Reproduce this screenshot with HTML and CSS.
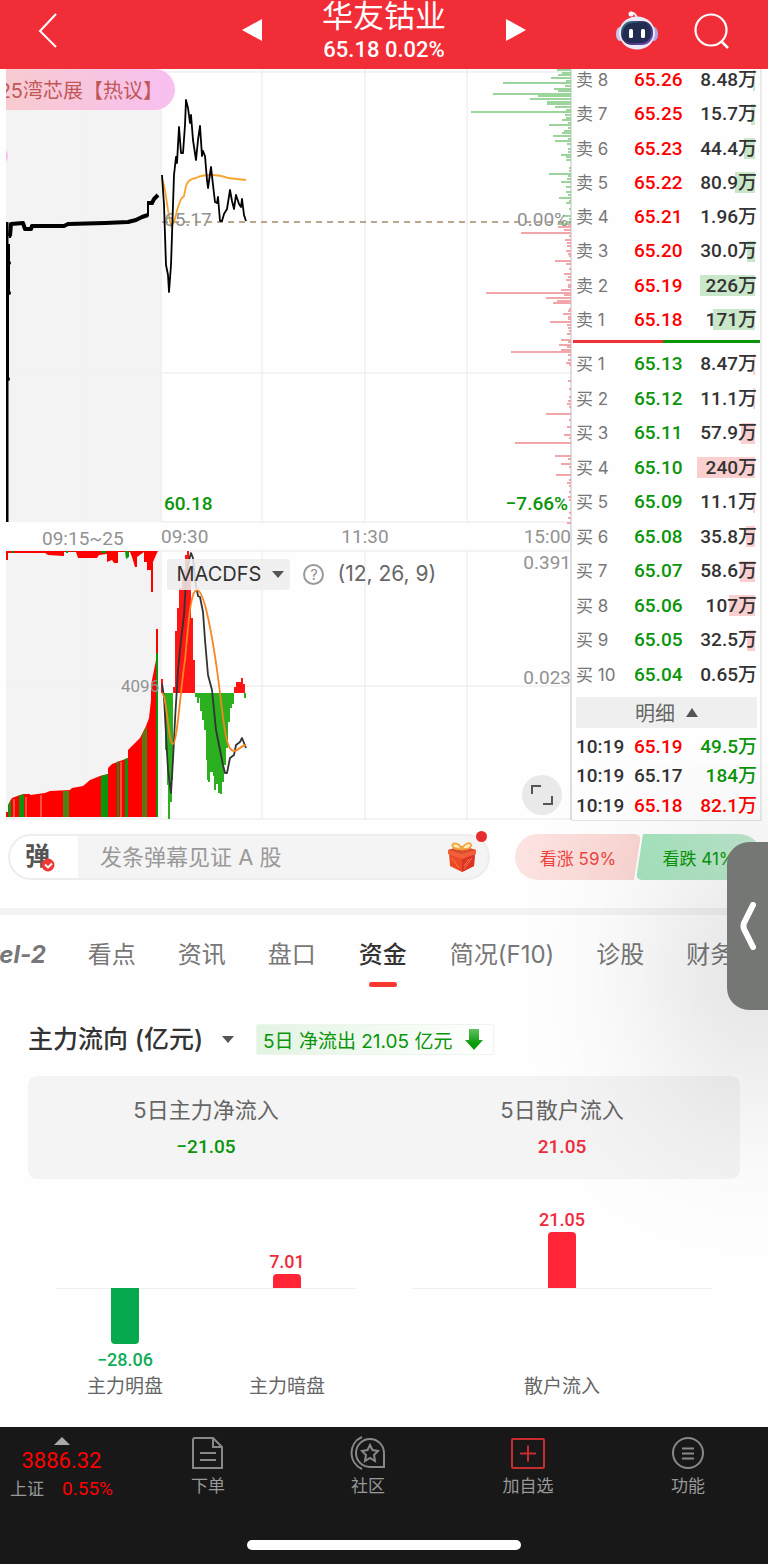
FILE: index.html
```html
<!DOCTYPE html>
<html lang="zh-CN">
<head>
<meta charset="utf-8">
<meta name="viewport" content="width=device-width, initial-scale=1">
<title>华友钴业 65.18</title>
<link rel="stylesheet" href="styles.css">
</head>
<body>
<header class="topbar">
  <button class="icon-btn back" aria-label="返回"><svg width="20" height="36" viewBox="0 0 20 36"><path d="M18 1 2 18l16 16" fill="none" stroke="#fff" stroke-width="2"/></svg></button>
  <div class="stock">
    <button class="icon-btn" aria-label="上一只"><svg width="20" height="22" viewBox="0 0 20 22"><path d="M0 11 20 0v22z" fill="#fff"/></svg></button>
    <div class="stock-title"><h1>华友钴业</h1><p>65.18 0.02%</p></div>
    <button class="icon-btn" aria-label="下一只"><svg width="20" height="22" viewBox="0 0 20 22"><path d="M20 11 0 0v22z" fill="#fff"/></svg></button>
  </div>
  <div class="tools">
    <button class="icon-btn" aria-label="智能助手"><svg width="42" height="40" viewBox="0 0 42 40">
      <defs><linearGradient id="face" x1="0" y1="0" x2="1" y2="1"><stop offset="0" stop-color="#3b8b98"/><stop offset=".4" stop-color="#28284f"/><stop offset="1" stop-color="#7d50d0"/></linearGradient></defs>
      <path d="M14 2q6-1 7 6" fill="none" stroke="#f4e4f0" stroke-width="2"/><circle cx="15" cy="3" r="2.5" fill="#fff"/>
      <ellipse cx="4" cy="23" rx="4" ry="7" fill="#c9c7f0"/><ellipse cx="38" cy="23" rx="4" ry="7" fill="#aaa9e4"/>
      <ellipse cx="21" cy="22" rx="18" ry="16.500" fill="#eceafb"/>
      <rect x="5" y="10" width="32" height="24" rx="11" fill="url(#face)"/><rect x="7" y="12" width="28" height="20" rx="9" fill="#222c50"/>
      <rect x="13" y="18" width="4" height="9" rx="1.500" fill="#fff"/><rect x="25" y="18" width="4" height="9" rx="1.500" fill="#fff"/>
    </svg></button>
    <button class="icon-btn" aria-label="搜索"><svg width="36" height="36" viewBox="0 0 36 36"><circle cx="17" cy="17" r="15.500" fill="none" stroke="#fff" stroke-width="2.200"/><path d="m27 28 7 7" stroke="#fff" stroke-width="2.500"/></svg></button>
  </div>
</header>

<main class="content">
<section class="board">
  <div class="chart">
    <svg class="chart-svg" viewBox="6 69 566 751" role="img" aria-label="分时走势">
      <rect x="6" y="69" width="155" height="453" fill="#f3f3f3"/><rect x="6" y="551" width="154" height="267" fill="#f3f3f3"/>
      <g fill="none" stroke="#efefef" stroke-width="1.500">
        <path d="M161 72H571M161 373H571M161 522H571M6 551H571M161 686H571M6 819H572M161 69V522M262 69V522M365 69V522M467 69V522M161 551V819M262 551V819M365 551V819M467 551V819"/>
        <path d="M84 110V522M84 551V800M6 373H161M6 686H161" stroke-dasharray="2 2" stroke-width="1"/>
      </g>
      <path d="M571 69V820" stroke="#dedede" stroke-width="2"/>
      <path fill="none" stroke="#9bd59b" stroke-width="1.800" d="M571 70h-14m14 3h-9m9 2h-13m13 3h-20m20 3h-5m5 2h-68m68 3h-6m6 3h-17m17 2h-13m13 3h-78m78 2h-33m33 3h-41m41 3h-24m24 2h-24m24 3h-16m16 3h-5m5 2h-100m100 3h-6m6 3h-5m5 2h-9m9 3h-3m3 2h-22m22 3h-3m3 3h-7m7 2h-9m9 3h-18m18 3h-3m3 2h-16m16 3h-4m4 5h-3m3 3h-3m3 3h-10m10 2h-5m5 3h-5m5 8h-2m2 3h-2m2 3h-22m22 2h-3m3 3h-4m4 3h-10m10 5h-5m5 5h-5m5 3h-3m3 3h-12m12 3h-2m2 2h-5m5 6h-2m2 7h-8m8 3h-2m2 3h-4m4 2h-13"/>
      <path fill="none" stroke="#f2a6aa" stroke-width="1.800" d="M571 225h-3m3 2h-13m13 3h-7m7 3h-50m50 3h-2m2 4h-6m6 3h-4m4 3h-4m4 5h-5m5 3h-3m3 2h-2m2 5h-16m16 3h-5m5 5h-2m2 5h-7m7 3h-3m3 3h-5m5 5h-3m3 2h-3m3 3h-10m10 3h-85m85 2h-7m7 3h-25m25 3h-14m14 2h-18m18 6h-2m2 2h-3m3 3h-8m8 3h-3m3 2h-3m3 3h-21m21 3h-4m4 3h-3m3 3h-2m2 3h-4m4 6h-10m10 2h-3m3 3h-12m12 2h-4m4 3h-10m10 2h-60m60 3h-3m3 5h-3m3 3h-5m5 2h-2m2 16h-3m3 8h-2m2 8h-2m2 4h-3m3 3h-4m4 3h-2m2 7h-25m25 6h-2m2 7h-4m4 8h-7m7 3h-2m2 5h-56m56 13h-16m16 3h-3m3 5h-10m10 3h-2m2 8h-15m15 5h-2m2 3h-4m4 3h-2m2 6h-2m2 5h-3m3 3h-2m2 13h-2m2 5h-3m3 5h-4"/>
      <path d="M162 222H571" stroke="#a58b6b" stroke-width="1.500" stroke-dasharray="6 5"/>
      <path d="M7 522V222" fill="none" stroke="#000" stroke-width="3"/><path d="M8 379V292M9 292V264M9 262V244M10 238V235" fill="none" stroke="#000" stroke-width="2"/>
      <g><circle cx="10" cy="235" r="2"/><circle cx="9" cy="263" r="2"/><circle cx="9" cy="293" r="2"/><circle cx="8" cy="379" r="2"/></g>
      <path d="M10 236L11 224 23 223 25 229 31 229 32 226 64 226 68 224 105 223 128 222 136 220 142 217 148 215" fill="none" stroke="#000" stroke-width="4" stroke-linejoin="round"/>
      <path d="M148 216V203" stroke="#000" stroke-width="2"/><path d="M147 203H152L154 199 158 195" fill="none" stroke="#000" stroke-width="4"/>
      <path d="M162 178 165 190 168 210 171 226 174 222 178 207 181 199 184 196 186 186Q188 179 196 178C203 174 218 174 228 178L246 180" fill="none" stroke="#f6a52e" stroke-width="1.800"/>
      <g class="lbl"><text x="164" y="226">65.17</text><text x="568" y="226" text-anchor="end">0.00%</text>
      <text x="161" y="543">09:30</text><text x="42" y="545">09:15~25</text><text x="365" y="543" text-anchor="middle">11:30</text><text x="571" y="543" text-anchor="end">15:00</text><text x="571" y="569" text-anchor="end">0.391</text><text x="571" y="684" text-anchor="end">0.023</text></g>
      <g class="lbl lbl-green"><text x="164" y="510">60.18</text><text x="568" y="510" text-anchor="end">−7.66%</text></g>
      <path d="M162 175 164 205 166 265 168 275 169 292 171 265 173 205 174 175 176 157 177 163 179 127 181 153 183 153 185 125 186 100 188 108 190 123 191 115 193 140 196 160 198 140 200 126 202 156 203 151 205 156 207 180 208 188 211 167 213 185 215 202 217 203 218 197 220 221 222 221 224 214 227 209 230 190 232 201 234 209 236 195 239 204 241 207 242 199 244 215 246 221" fill="none" stroke="#000" stroke-width="1.800" stroke-linejoin="round"/>

      <path fill="#f00" d="M6 817V812H8V805L12 798 20 795 24 794H30V795L45 793 50 791 70 790 72 788 83 786 90 780 100 776 108 774V768L112 764 128 758V750L132 746 140 738 146 726 149 718 151 700V685L154 670 156 660V629H158V817z"/>
      <path fill="#0a950a" d="M8 817V806L11 799V817zM19 817V796L24 794V817zM101 817V776L108 774V817zM125 817V759L128 758V817zM117 817V762L119 761V817zM156 817V653H158V817z"/>
      <path fill="#4b8410" d="M63 817V791H69V817zM142 817V735L147 726V817z"/><path d="M144 817V733" stroke="#a24b08"/>
      <path d="M14 817V799M26 817V797M41 817V795M121 817V762" stroke="#ff9a85"/>
      <path fill="#f00" d="M6 551V560H8V553H28L45 553 48 555 64 556V552H76L78 558H97L99 555 107 554V562L112 560 114 563H118V552H130L132 557 135 567H137V557L144 552V562H147V570H151V592H153V562L156 555 158 551z"/>
      <path fill="#0a950a" d="M66 551H68V553H66zM125 551H129V557L126 559zM12 551H14V553H12zM101 551H106V553H101z"/>
      <text class="lbl small" x="121" y="692">4096</text>

      <path fill="#ff1515" d="M161 693V679H163V693zM173 693V687H175V631H177V608H179V588H182V570H185V555H187V551H189V568H191V618H193V660H195V693zM234 693V687H236V682H241V678H243V684H245V693z"/>
      <path fill="#2bb01f" d="M163 693V700H165V750H167V785H168V819H170V802H172V780H173V693zM195 693V697H197V703H199V698H200V711H202V720H204V730H206V760H207V780H208V782H210V772H213V776H214V790H216V784H218V793H220V794H222V782H224V765H226V748H228V722H230V708H232V704H234V693zM244 693V698H246V693z"/>
      <path d="M162 684 164 697 166 735 168 770 171 793 173 760 175 720 178 670 181 640 184 615 186 580 189 560 191 553 193 558 195 580 198 596 200 597 203 612 205 640 208 675 212 690 216 730 219 745 223 765 225 773 227 773 230 758 234 755 236 745 240 742 242 738 246 748" fill="none" stroke="#333" stroke-width="1.800" stroke-linejoin="round"/>
      <path d="M162 693C167 694 168 744 173 744 177 744 181 685 185 660 188 630 190 590 197 590 206 590 216 660 220 693 224 725 226 751 234 751 239 751 241 745 246 745" fill="none" stroke="#f98420" stroke-width="1.800"/>
    </svg>
    <div class="bullet">25湾芯展【热议】</div>
    <div class="bullet-dot"></div>
    <div class="indicator">
      <span class="select-wrap"><select class="ind-select" aria-label="指标"><option>MACDFS</option></select><i class="caret"></i></span>
      <button class="help" aria-label="指标说明">?</button>
      <span>(12, 26, 9)</span>
    </div>
    <button class="expand" aria-label="全屏"><svg width="22" height="22" viewBox="0 0 22 22"><path d="M1 10V2H10M21 12V20H12" fill="none" stroke="#555" stroke-width="2"/></svg></button>
  </div>

  <aside class="book">
    <table class="quotes sell">
      <tr><th>卖 8</th><td>65.26</td><td style="--w:2px">8.48万</td></tr>
      <tr><th>卖 7</th><td>65.25</td><td style="--w:4px">15.7万</td></tr>
      <tr><th>卖 6</th><td>65.23</td><td style="--w:11px">44.4万</td></tr>
      <tr><th>卖 5</th><td>65.22</td><td style="--w:20px">80.9万</td></tr>
      <tr><th>卖 4</th><td>65.21</td><td style="--w:0px">1.96万</td></tr>
      <tr><th>卖 3</th><td>65.20</td><td style="--w:8px">30.0万</td></tr>
      <tr><th>卖 2</th><td>65.19</td><td style="--w:55px">226万</td></tr>
      <tr><th>卖 1</th><td>65.18</td><td style="--w:42px">171万</td></tr>
    </table>
    <div class="ratio"></div>
    <table class="quotes buy">
      <tr><th>买 1</th><td>65.13</td><td style="--w:2px">8.47万</td></tr>
      <tr><th>买 2</th><td>65.12</td><td style="--w:2px">11.1万</td></tr>
      <tr><th>买 3</th><td>65.11</td><td style="--w:14px">57.9万</td></tr>
      <tr><th>买 4</th><td>65.10</td><td style="--w:58px">240万</td></tr>
      <tr><th>买 5</th><td>65.09</td><td style="--w:2px">11.1万</td></tr>
      <tr><th>买 6</th><td>65.08</td><td style="--w:9px">35.8万</td></tr>
      <tr><th>买 7</th><td>65.07</td><td style="--w:15px">58.6万</td></tr>
      <tr><th>买 8</th><td>65.06</td><td style="--w:26px">107万</td></tr>
      <tr><th>买 9</th><td>65.05</td><td style="--w:8px">32.5万</td></tr>
      <tr><th>买 10</th><td>65.04</td><td style="--w:0px">0.65万</td></tr>
    </table>
    <button class="detail-btn">明细 <i class="tri-up"></i></button>
    <table class="quotes trades">
      <tr><th>10:19</th><td class="red">65.19</td><td class="green">49.5万</td></tr>
      <tr><th>10:19</th><td>65.17</td><td class="green">184万</td></tr>
      <tr><th>10:19</th><td class="red">65.18</td><td class="red">82.1万</td></tr>
    </table>
  </aside>
</section>

<section class="social">
  <div class="danmu">
    <button class="danmu-toggle" aria-label="弹幕开关"><b>弹</b><svg width="14" height="14" viewBox="0 0 14 14"><circle cx="7" cy="7" r="6.500" fill="#ee3b36"/><path d="m4 6.500 3 3 4-4" fill="none" stroke="#fff" stroke-width="1.800"/></svg></button>
    <input class="danmu-input" type="text" placeholder="发条弹幕见证 A 股" aria-label="发条弹幕">
    <button class="icon-btn gift" aria-label="礼物"><svg width="30" height="32" viewBox="0 0 30 32">
      <path d="M2 12 15 16V31L3 25zM28 12 15 16V31L27 25z" fill="#ec4a24"/><path d="M28 12 15 16V31L27 25z" fill="#dc3424"/>
      <path d="M1 9 15 5 29 9V13L15 18 1 13z" fill="#f2603a"/><path d="M1 9 15 13 29 9 15 5z" fill="#de4c30"/><path d="M5 17 12 27M25 17l-8 11M22 18l-5 7" stroke="#f8794c"/>
      <path d="M15 8C11 0 3 2 6 6 8 8 12 8 15 8 20 8 23 8 24 5 25 1 18 1 15 8z" fill="#fff0c0" stroke="#f0a840" stroke-width="2"/>
    </svg></button>
    <i class="badge"></i>
  </div>
  <div class="vote">
    <button class="vote-up">看涨 59%</button>
    <button class="vote-down">看跌 41%</button>
  </div>
</section>

<nav class="tabs">
  <a href="#" class="level">Level-2</a><a href="#">看点</a><a href="#">资讯</a><a href="#">盘口</a><a href="#" class="active">资金</a><a href="#">简况(F10)</a><a href="#">诊股</a><a href="#">财务</a>
</nav>

<section class="flow">
  <div class="flow-head">
    <span class="select-wrap"><select class="flow-select" aria-label="流向"><option>主力流向 (亿元)</option></select><i class="caret"></i></span>
    <span class="flow-tag">5日 净流出 21.05 亿元 <svg width="18" height="21" viewBox="0 0 18 21"><defs><linearGradient id="dn" x2="0" y2="1"><stop offset="0" stop-color="#5fc25f"/><stop offset=".7" stop-color="#0a9a0a"/></linearGradient></defs><path d="M4 0H14V11H18L9 21 0 11H4z" fill="url(#dn)"/></svg></span>
  </div>
  <div class="card">
    <div><h2>5日主力净流入</h2><p class="green">−21.05</p></div>
    <div><h2>5日散户流入</h2><p class="card-red">21.05</p></div>
  </div>
  <div class="bars">
    <div class="group pair">
      <div class="col"><div class="up"></div><div class="down"><i class="bar neg" style="height:56px"></i><b>−28.06</b></div><span>主力明盘</span></div>
      <div class="col"><div class="up"><b>7.01</b><i class="bar" style="height:14px"></i></div><div class="down"></div><span>主力暗盘</span></div>
    </div>
    <div class="group">
      <div class="col"><div class="up"><b>21.05</b><i class="bar" style="height:56px"></i></div><div class="down"></div><span>散户流入</span></div>
    </div>
  </div>
</section>
<button class="drawer" aria-label="展开侧栏"><svg width="16" height="48" viewBox="0 0 16 48"><path d="M13 3 4 21q-1 3 0 6l9 18" fill="none" stroke="#fff" stroke-width="6" stroke-linecap="round" stroke-linejoin="round"/></svg></button>
</main>

<footer class="bottom">
  <div class="bottom-row">
    <a href="#" class="index"><i class="tri-up light"></i><b>3886.32</b><span>上证 <em>0.55%</em></span></a>
    <a href="#"><svg width="32" height="34" viewBox="0 0 32 34" fill="none" stroke="#888" stroke-width="2"><path d="M3 2H21L30 11V32H1V4Q1 2 3 2M21 2V11H30M8 17H24M8 24H24"/></svg>下单</a>
    <a href="#"><svg width="36" height="34" viewBox="0 0 36 34" fill="none" stroke="#888" stroke-width="2"><path d="M20 3A14 14 0 1 0 20 31H34V17A14 14 0 0 0 20 3zM12 1C-2 7-2 27 12 33"/><path d="m20 9 2.500 5 5.500 1-4 4 1 6-5-3-5 3 1-6-4-4 5.500-1z"/></svg>社区</a>
    <a href="#"><svg width="34" height="34" viewBox="0 0 34 34" fill="none" stroke="#c82c2e" stroke-width="2"><rect x="1" y="3" width="32" height="29" rx="1"/><path d="M9 17.500H25M17 9.500V25.500"/></svg>加自选</a>
    <a href="#"><svg width="34" height="34" viewBox="0 0 34 34" fill="none" stroke="#888" stroke-width="2"><circle cx="17" cy="17" r="15"/><path d="M11 12.500H23M11 17.500H23M11 22.500H23"/></svg>功能</a>
  </div>
  <i class="home"></i>
</footer>
</body>
</html>
```
FILE: styles.css
```css
* { box-sizing: border-box; }
body { margin: 0; min-height: 100vh; display: flex; flex-direction: column; background: #fefefe; color: #333; font-family: Inter, "Noto Sans CJK SC", sans-serif; overflow-x: hidden; }
button, input, select { font: inherit; color: inherit; border: 0; background: none; padding: 0; margin: 0; appearance: none; outline: 0; }
a { color: inherit; text-decoration: none; }
h1, h2, p { margin: 0; font-weight: 400; }
svg { display: block; }
i, em { font-style: normal; }
.red { color: #f00; }
.green { color: #0a950a; }

.topbar { height: 69px; background: #f12e37; display: grid; grid-template-columns: 1fr auto 1fr; align-items: center; color: #fff; padding: 0 38px; overflow: hidden; }
.icon-btn { display: block; flex: none; }
.back { justify-self: start; padding-bottom: 8px; }
.stock { display: flex; align-items: center; gap: 60px; }
.stock > .icon-btn { padding-bottom: 10px; }
.stock-title { height: 69px; display: flex; flex-direction: column; justify-content: flex-end; align-items: center; padding-bottom: 5px; white-space: nowrap; }
.stock-title h1 { font-size: 31px; line-height: 40px; }
.stock-title p { font: 500 22px/28px Roboto, sans-serif; }
.tools { display: flex; justify-self: end; gap: 36px; align-items: center; padding-bottom: 8px; }

.content { position: relative; flex: 1; }
.board { display: grid; grid-template-columns: minmax(0, 1fr) 196px; padding-left: 6px; }
.chart { position: relative; overflow: hidden; }
.chart-svg { width: 100%; height: auto; }
.lbl { font: 400 19px Roboto, sans-serif; fill: #929292; }
.lbl-green { font-weight: 500; fill: #0a950a; }
.small { font-size: 17px; }
.bullet { position: absolute; left: 0; top: 0; width: 169px; height: 41px; line-height: 45px; display: flex; justify-content: flex-end; overflow: hidden; border-radius: 0 21px 21px 0; background: linear-gradient(90deg, #f8cbd0, #f8bff0); color: #c05858; font-size: 20px; white-space: nowrap; padding-right: 12px; }
.bullet-dot { position: absolute; left: -18px; top: 77px; width: 20px; height: 20px; border-radius: 10px; background: #f8bff0; }
.indicator { position: absolute; left: 28%; top: 65%; margin: 1px 0 0 3px; display: flex; align-items: center; gap: 13px; font-size: 20px; line-height: 30px; color: #666; white-space: nowrap; }
.indicator > span:last-child { font-size: 21px; }
.select-wrap { position: relative; display: inline-flex; align-items: center; }
.caret { position: absolute; right: 6px; border: 6px solid transparent; border-top: 7px solid #555; border-bottom: 0; pointer-events: none; }
.ind-select { height: 31px; background: rgba(238, 238, 238, .86); border-radius: 3px; padding: 0 29px 0 9px; color: #333; }
.help { width: 21px; height: 21px; border: 2px solid #999; border-radius: 50%; font-size: 14px; line-height: 17px; color: #888; }
.expand { position: absolute; right: 10px; bottom: 6px; width: 40px; height: 40px; border-radius: 50%; background: #e9e9e9; display: grid; place-items: center; }

.book { margin-right: 6px; padding: 0 3px 0 1px; border-right: 2px solid #ebebeb; border-bottom: 1px solid #e2e2e2; overflow: hidden; height: 752px; }
.quotes { width: 100%; border-collapse: collapse; table-layout: fixed; font: 500 19px/24px Roboto, "Noto Sans CJK SC", sans-serif; }
.quotes th { width: 61px; padding: 0 0 0 3px; text-align: left; font: 400 17px/24px Inter, "Noto Sans CJK SC", sans-serif; color: #777; white-space: nowrap; }
.quotes td { padding: 0; width: 56px; white-space: nowrap; }
.quotes td:last-child { width: auto; text-align: right; }
.sell { height: 274px; margin-top: -6px; }
.sell td:nth-child(2) { color: #f00; }
.buy { height: 345px; margin-top: 4px; }
.buy td:nth-child(2) { color: #0a950a; }
.sell td:last-child { background: linear-gradient(#c9e7c9, #c9e7c9) no-repeat right 2px center / var(--w) 21px; }
.buy td:last-child { background: linear-gradient(#f9cfd0, #f9cfd0) no-repeat right 2px center / var(--w) 21px; }
.ratio { height: 3px; margin: 3px -3px 0 0; background: linear-gradient(90deg, #ee3135 48%, #0a950a 48%); }
.detail-btn { display: flex; align-items: center; justify-content: center; gap: 11px; width: calc(100% - 3px); height: 31px; margin: 5px 0 4px 3px; background: #efefef; color: #666; font-size: 20px; }
.tri-up { border: 6px solid transparent; border-bottom: 9px solid #555; border-top: 0; }
.trades { height: 89px; }
.trades th { font: 500 19px/24px Roboto, sans-serif; color: #333; }

.social { display: flex; align-items: center; justify-content: space-between; padding: 13px 6px 28px 8px; border-bottom: 7px solid #f3f3f3; }
.danmu { position: relative; width: 482px; height: 46px; border: 2px solid #ededed; border-radius: 23px; background: #f4f4f4; display: flex; align-items: center; }
.danmu-toggle { display: flex; align-items: flex-end; height: 42px; width: 68px; background: #fff; border-radius: 21px 0 0 21px; padding: 0 0 6px 15px; color: #555; }
.danmu-toggle b { font-size: 25px; line-height: 32px; }
.danmu-toggle svg { margin-left: -9px; flex: none; }
.danmu-input { flex: 1; min-width: 0; padding-left: 22px; font-size: 22px; height: 40px; }
.danmu-input::placeholder { color: #999; opacity: 1; }
.gift { margin-right: 11px; }
.badge { position: absolute; right: 1px; top: -5px; width: 11px; height: 11px; border-radius: 50%; background: #e82c30; }
.vote { display: flex; font-size: 17px; }
.vote button { width: 126px; height: 46px; }
.vote-up { background: linear-gradient(90deg, #fce3e1, #fad6d3); color: #ee4440; border-radius: 23px 6px 6px 23px; clip-path: polygon(0 0, 100% 0, calc(100% - 7px) 100%, 0 100%); }
.vote .vote-down { background: linear-gradient(90deg, #a4e4bd, #c2ead1); color: #0a950a; border-radius: 6px 23px 23px 6px; margin-left: -5px; clip-path: polygon(7px 0, 100% 0, 100% 100%, 0 100%); }

.tabs { display: flex; gap: 42px; margin-left: -42px; padding-top: 20px; font-size: 24px; line-height: 40px; color: #777; white-space: nowrap; overflow: hidden; }
.tabs a { padding-bottom: 12px; }
.level { font-style: italic; font-weight: 700; }
.tabs .active { color: #333; font-weight: 500; display: flex; flex-direction: column; align-items: center; padding: 0 1px; }
.tabs .active::after { content: ""; width: 28px; height: 5px; border-radius: 3px; background: #f93830; margin-top: 7px; }

.flow { padding: 36px 28px 28px; }
.flow-head { display: flex; align-items: center; gap: 16px; height: 32px; }
.flow-select { font-size: 25px; font-weight: 500; line-height: 32px; padding-right: 36px; }
.flow-tag { display: flex; align-items: center; gap: 13px; height: 31px; padding: 0 10px 0 6px; border: 1px solid #edf5ed; border-radius: 3px; background: linear-gradient(90deg, #e3f4e3, #fff); color: #0a950a; font-size: 19px; white-space: nowrap; }
.card { display: grid; grid-template-columns: 1fr 1fr; margin-top: 21px; padding: 18px 0; border-radius: 9px; background: #f4f4f4; text-align: center; }
.card h2 { font-size: 22px; line-height: 32px; color: #666; }
.card p { font: 500 19px/24px Roboto, sans-serif; margin: 9px 0 2px; }
.card-red { color: #ee2b3a; }
.bars { display: grid; grid-template-columns: 1fr 1fr; gap: 56px; padding: 15px 28px 0; }
.group { display: flex; justify-content: center; background: linear-gradient(#eee, #eee) no-repeat 0 94px / 100% 1px; }
.pair { justify-content: space-between; padding: 0 31px; }
.col { display: flex; flex-direction: column; align-items: center; width: 76px; font-size: 19px; line-height: 22px; color: #666; white-space: nowrap; }
.col b { font: 500 18px/24px Roboto, sans-serif; color: #f02a3c; }
.up, .down { display: flex; flex-direction: column; align-items: center; }
.up { height: 94px; justify-content: flex-end; }
.down { height: 88px; }
.bar { width: 28px; background: #ff2537; border-radius: 4px 4px 0 0; }
.neg { background: #06a94d; border-radius: 0 0 4px 4px; }
.down b { color: #10ad58; margin-top: 4px; }

.drawer { position: absolute; z-index: 2; right: 0; top: 773px; width: 41px; height: 168px; border-radius: 22px 0 0 22px; background: #757775; display: grid; place-items: center; box-shadow: 10px 50px 180px 20px rgba(0, 0, 0, .34); }
.bottom { position: relative; z-index: 3; background: #181818; color: #999; padding: 9px 0 14px; }
.bottom-row { display: grid; grid-template-columns: 4fr 5fr 5fr 5fr 5fr; height: 104px; }
.bottom-row > a { display: flex; flex-direction: column; align-items: center; gap: 4px; font-size: 17px; line-height: 24px; white-space: nowrap; }
.bottom-row .index { gap: 0; padding-right: 5px; }
.index b { font: 400 22px/30px Roboto, sans-serif; color: #f00; margin: 1px 0; }
.index span { display: flex; gap: 18px; align-items: center; }
.index em { font: 400 19px/24px Roboto, sans-serif; color: #f00; }
.light { border: 8px solid transparent; border-bottom: 8px solid #aaa; border-top: 0; margin-top: 1px; }
.home { display: block; width: 274px; height: 10px; margin: 0 auto; border-radius: 5px; background: #fff; }
```
